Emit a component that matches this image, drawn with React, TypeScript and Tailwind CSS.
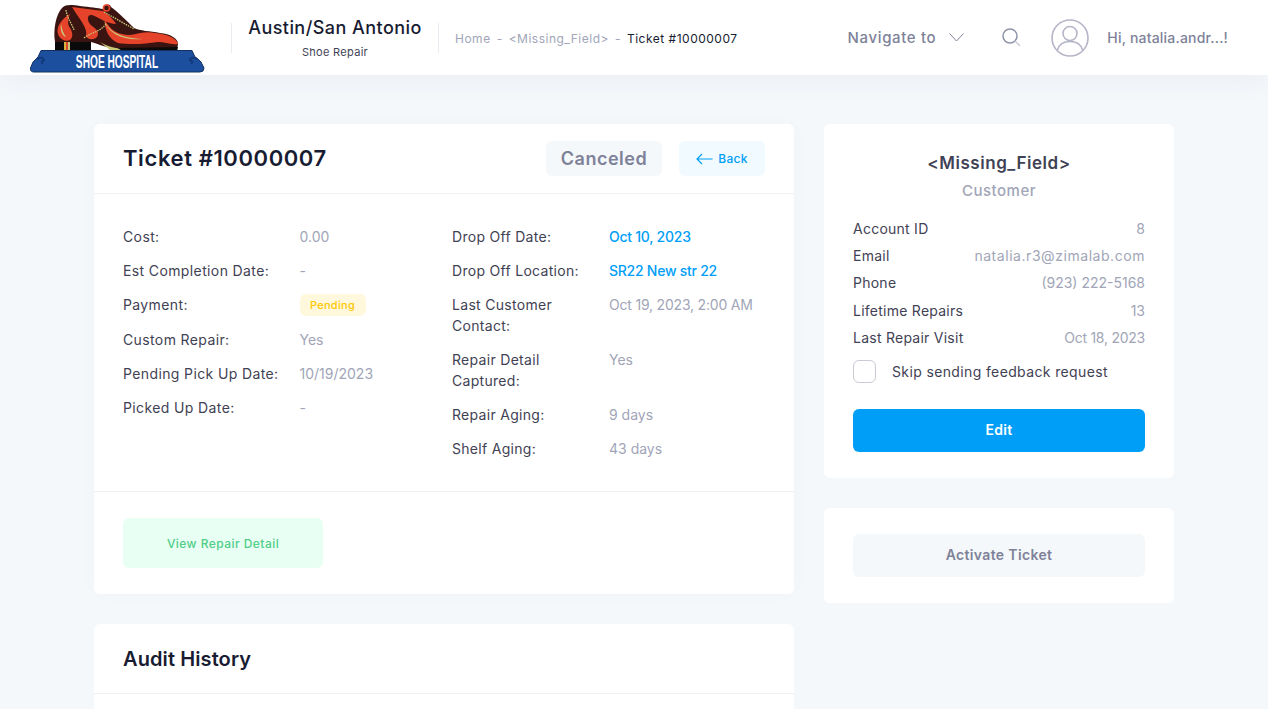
import React from 'react';

const leftRows = [
  { label: 'Cost:', value: '0.00' },
  { label: 'Est Completion Date:', value: '-' },
  { label: 'Payment:', value: 'Pending', badge: true },
  { label: 'Custom Repair:', value: 'Yes' },
  { label: 'Pending Pick Up Date:', value: '10/19/2023' },
  { label: 'Picked Up Date:', value: '-' },
];

const rightRows = [
  { label: 'Drop Off Date:', value: 'Oct 10, 2023', link: true },
  { label: 'Drop Off Location:', value: 'SR22 New str 22', link: true },
  { label: 'Last Customer Contact:', value: 'Oct 19, 2023, 2:00 AM', tight: true },
  { label: 'Repair Detail Captured:', value: 'Yes' },
  { label: 'Repair Aging:', value: '9 days' },
  { label: 'Shelf Aging:', value: '43 days' },
];

const customerRows = [
  ['Account ID', '8', ''],
  ['Email', 'natalia.r3@zimalab.com', 'tracking-[0.55px]'],
  ['Phone', '(923) 222-5168', ''],
  ['Lifetime Repairs', '13', ''],
  ['Last Repair Visit', 'Oct 18, 2023', 'tracking-[-0.25px]'],
];

// drawn in page coordinates, hence the viewBox offset
const Logo = () => (
  <svg width="176" height="75" viewBox="29 0 176 75" className="shrink-0">
    {/* shoe body */}
    <path d="M55 42 C53 30 56 14 62 8 C66 4 72 5 80 6 C90 7 98 8 103 9 C104 4 110 3 111 7 C118 12 126 20 134 28 C140 31 150 31 160 33 C170 34 178 38 178 44 L177 50 L118 50 C108 48 98 44 91 42 Z" fill="#3a1410" />
    {/* red panels */}
    <path d="M70 14 C60 20 56 28 58 34 C60 40 66 42 70 40 C74 37 72 31 70 28 C67 24 68 19 70 14 Z" fill="#e5432a" />
    <path d="M72 7 L103 11 C110 16 114 20 116 24 C108 24 100 18 92 15 C86 14 87 22 92 26 C98 30 100 34 96 38 C92 40 88 40 86 36 C88 28 80 20 72 7 Z" fill="#e5432a" />
    <path d="M105 20 C110 30 118 35 130 35 C138 34 146 31 155 33 C165 34 176 37 178 44 C170 45 165 42 158 42 C145 44 130 45 118 43 C110 40 104 30 105 20 Z" fill="#e5432a" />
    {/* stitching and accents */}
    <path d="M66 10 C67 18 72 24 74 30 M104 12 L134 29 M84 38 C92 32 100 32 106 24" stroke="#c9c77a" strokeWidth="1.3" strokeDasharray="1.5 1" fill="none" />
    <path d="M61 24 C60 30 62 36 66 37 C63 33 62 29 61 24 Z" fill="#c9c77a" />
    <path d="M103 19 C108 30 118 38 143 39 C124 41 108 34 103 19 Z" fill="#c9c77a" />
    <path d="M100 42 C108 47 118 49 130 50 L110 50 Z" fill="#c9c77a" />
    <circle cx="106.500" cy="8" r="3" fill="none" stroke="#e5432a" strokeWidth="1.6" />
    {/* heel and sole */}
    <rect x="55" y="42" width="36" height="9" fill="#0a0a0a" />
    <rect x="64" y="42" width="2" height="9" fill="#d8b23c" />
    <rect x="66" y="42" width="2" height="9" fill="#d9482e" />
    <rect x="68" y="42" width="2" height="9" fill="#c9c77a" />
    <path d="M118 48 L178 47 L177 51 L122 51 Z" fill="#0a0a0a" />
    {/* plinth */}
    <path d="M41 50.500 L192 50.500 L195 57 L198 59 L201 62 L204 68 Q204 72 200 72 L34 72 Q30 72 30.500 68 L33 62 L36 59 L38 57 Z" fill="#1d4f9f" stroke="#14305f" strokeWidth="1" />
    <path d="M37 59 Q43 56 44 60 Q40 62 43 64 M197 59 Q191 56 190 60 Q194 62 191 64" stroke="#123a7a" strokeWidth="2" fill="none" />
    <g transform="translate(117 68) scale(0.565 1)">
      <text x="0" y="0" textAnchor="middle" fill="#ffffff" fontSize="18" fontWeight="700" fontFamily="'Liberation Sans', sans-serif">SHOE HOSPITAL</text>
    </g>
  </svg>
);

const Header = () => (
  <header className="h-[75px] bg-white flex items-center shadow-[0_0_30px_rgba(82,63,105,0.08)] relative">
    <div className="ml-[29px]">
      <Logo />
    </div>
    <div className="ml-[26px] h-[30px] w-px bg-[#e9edf2]" />
    <div className="w-[206px] flex flex-col items-center">
      <span className="text-[18px] leading-[27px] font-medium text-[#181c32] tracking-[0.45px]">Austin/San Antonio</span>
      <span className="text-[11px] leading-[17px] text-[#3f4254] mt-[3px] tracking-[0.3px]">Shoe Repair</span>
    </div>
    <div className="h-[30px] w-px bg-[#e9edf2]" />
    <nav className="ml-[16px] flex items-center text-[12px] tracking-[0.5px] text-[#a1a5b7] gap-[6px] mt-[3px]">
      <span>Home</span>
      <span>-</span>
      <span>&lt;Missing_Field&gt;</span>
      <span>-</span>
      <span className="text-[#181c32]">Ticket #10000007</span>
    </nav>
    <div className="ml-auto flex items-center">
      <span className="text-[15px] font-medium text-[#7e8299] tracking-[0.65px] mt-[1px]">Navigate to</span>
      <svg width="15" height="9" viewBox="0 0 15 9" fill="none" stroke="#7e8299" strokeWidth="1" className="ml-[13px]">
        <path d="M0.500 0.500L7.500 8L14.500 0.500" />
      </svg>
      <svg width="19" height="19" viewBox="0 0 19 19" fill="none" className="ml-[38px]">
        <circle cx="8" cy="8" r="7" stroke="#8f93a8" strokeWidth="1.5" />
        <path d="M13 13L18 18" stroke="#c9ccd6" strokeWidth="1.5" />
      </svg>
      <svg width="38" height="38" viewBox="0 0 38 38" fill="none" stroke="#b5b5c8" strokeWidth="1.6" className="ml-[30px]">
        <circle cx="19" cy="19" r="18" />
        <circle cx="19" cy="14.500" r="7" />
        <path d="M6.500 31 C8 25.500 13 22.500 19 22.500 C25 22.500 30 25.500 31.500 31" />
      </svg>
      <span className="ml-[18px] mr-[40px] text-[14px] font-medium text-[#7e8299] tracking-[0.2px]">Hi, natalia.andr...!</span>
    </div>
  </header>
);

const App = () => {
  return (
    <div className="h-[709px] overflow-hidden bg-[#f4f8fb] font-['Inter',sans-serif]">
      <Header />
      <main className="flex gap-[30px] pl-[94px] pt-[49px]">
        <div className="w-[700px] flex flex-col gap-[30px]">
          <section className="bg-white rounded-[6px] shadow-[0_0_20px_rgba(76,87,125,0.02)]">
            <div className="h-[70px] px-[29px] flex items-center border-b border-[#eff2f5]">
              <h1 className="text-[22px] font-semibold text-[#181c32] tracking-[0.6px]">Ticket #10000007</h1>
              <span className="ml-auto h-[35px] w-[116px] rounded-[6px] bg-[#f4f8fb] flex items-center justify-center text-[18px] font-semibold text-[#7e8299] tracking-[0.5px]">Canceled</span>
              <button className="ml-[17px] h-[35px] w-[86px] rounded-[6px] bg-[#f1faff] flex items-center justify-center gap-[5px] text-[12px] font-medium text-[#009ef7] tracking-[0.3px]">
                <svg width="17" height="12" viewBox="0 0 17 12" fill="none" stroke="#009ef7" strokeWidth="1.2">
                  <path d="M16.500 6H1M6 1L1 6l5 5" />
                </svg>
                Back
              </button>
            </div>

            <div className="h-[298px] pl-[29px] pt-[32px] border-b border-[#eff2f5] flex">
              <div className="w-[329px] flex flex-col gap-[13px]">
                {leftRows.map((row) => (
                  <div key={row.label} className="flex text-[14px] leading-[21px]">
                    <span className="w-[176.5px] shrink-0 font-[420] text-[#3f4254] tracking-[0.38px]">{row.label}</span>
                    {row.badge ? (
                      <span className="h-[22px] w-[66px] justify-center rounded-[6px] bg-[#fff8dd] text-[#ffc700] text-[11px] tracking-[0.3px] font-medium flex items-center">{row.value}</span>
                    ) : (
                      <span className="text-[#a1a5b7]">{row.value}</span>
                    )}
                  </div>
                ))}
              </div>
              <div className="w-[320px] flex flex-col gap-[13px]">
                {rightRows.map((row) => (
                  <div key={row.label} className="flex text-[14px] leading-[21px]">
                    <span className="w-[157px] pr-[20px] shrink-0 font-[420] text-[#3f4254] tracking-[0.3px]">{row.label}</span>
                    <span className={row.link ? 'text-[#009ef7] font-medium tracking-[-0.25px]' : row.tight ? 'text-[#a1a5b7] tracking-[-0.2px]' : 'text-[#a1a5b7]'}>{row.value}</span>
                  </div>
                ))}
              </div>
            </div>

            <div className="h-[102px] px-[29px] pt-[26px]">
              <button className="h-[50px] w-[200px] rounded-[6px] bg-[#e8fff3] pt-[2px] text-[12px] font-medium text-[#50cd89] tracking-[0.45px]">View Repair Detail</button>
            </div>
          </section>

          <section className="bg-white rounded-[6px] h-[200px]">
            <div className="h-[70px] px-[29px] flex items-center border-b border-[#eff2f5]">
              <h2 className="text-[20px] font-semibold text-[#181c32] tracking-[0.1px]">Audit History</h2>
            </div>
          </section>
        </div>

        <div className="w-[350px] flex flex-col gap-[30px]">
          <section className="h-[354px] bg-white rounded-[6px] px-[29px] pt-[26px]">
            <div className="text-center text-[17px] leading-[26px] font-semibold text-[#3f4254] tracking-[0.55px]">&lt;Missing_Field&gt;</div>
            <div className="text-center text-[15px] leading-[24px] font-medium text-[#a1a5b7] mt-[3px] tracking-[0.5px]">Customer</div>
            <div className="mt-[15px] flex flex-col gap-[6.2px]">
              {customerRows.map(([label, value, spacing]) => (
                <div key={label} className="flex justify-between text-[14px] leading-[21px]">
                  <span className="font-[420] text-[#3f4254] tracking-[0.25px]">{label}</span>
                  <span className={`text-[#a1a5b7] ${spacing}`}>{value}</span>
                </div>
              ))}
            </div>
            <label className="mt-[12px] flex items-center gap-[16px]">
              <span className="w-[23px] h-[23px] rounded-[6px] border border-[#c9ccd3] bg-white" />
              <span className="text-[14px] font-[420] text-[#3f4254] tracking-[0.37px]">Skip sending feedback request</span>
            </label>
            <button className="mt-[26px] w-full h-[43px] pb-[1px] rounded-[6px] bg-[#009ef7] text-white text-[14px] font-semibold tracking-[0.3px]">Edit</button>
          </section>

          <section className="h-[95px] bg-white rounded-[6px] px-[29px] flex items-center">
            <button className="w-full h-[43px] rounded-[6px] bg-[#f5f8fa] pb-[2px] text-[14px] font-semibold text-[#7e8299] tracking-[0.35px]">Activate Ticket</button>
          </section>
        </div>
      </main>
    </div>
  );
};

export default App;
